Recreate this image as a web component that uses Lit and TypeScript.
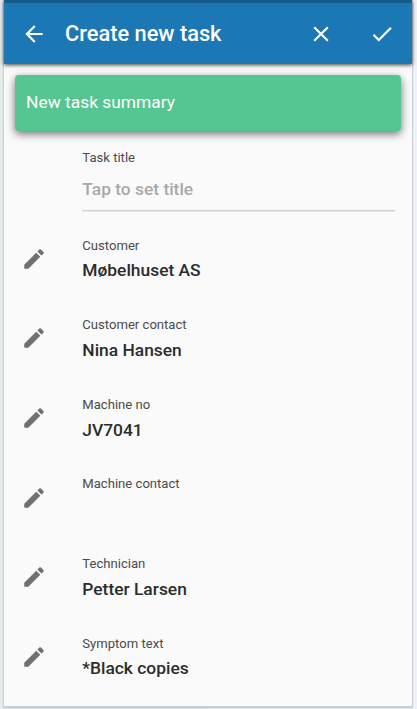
import { LitElement, html, css, svg } from "lit";
import { customElement } from "lit/decorators.js";

const ICONS = {
  back: "M20 11H7.83l5.59-5.59L12 4l-8 8 8 8 1.41-1.41L7.83 13H20v-2z",
  close: "M19 6.41L17.59 5 12 10.59 6.41 5 5 6.41 10.59 12 5 17.59 6.41 19 12 13.41 17.59 19 19 17.59 13.41 12z",
  check: "M9 16.17L4.83 12l-1.42 1.41L9 19 21 7l-1.41-1.41z",
  edit: "M3 17.25V21h3.75L17.81 9.94l-3.75-3.75L3 17.25zM20.71 7.04c.39-.39.39-1.02 0-1.41l-2.34-2.34c-.39-.39-1.02-.39-1.41 0l-1.83 1.83 3.75 3.75 1.83-1.83z",
};

const icon = (name: keyof typeof ICONS) =>
  html`<svg class="icon" viewBox="0 0 24 24" aria-hidden="true">${svg`<path d=${ICONS[name]}></path>`}</svg>`;

const FIELDS = [
  { label: "Customer", value: "Møbelhuset AS" },
  { label: "Customer contact", value: "Nina Hansen" },
  { label: "Machine no", value: "JV7041" },
  { label: "Machine contact", value: "" },
  { label: "Technician", value: "Petter Larsen" },
  { label: "Symptom text", value: "*Black copies" },
];

@customElement("app-root")
export class AppRoot extends LitElement {
  static styles = css`
    :host {
      display: block;
      box-sizing: border-box;
      height: 709px;
      padding: 0 5px 3px 4px;
      overflow: hidden;
      background: linear-gradient(90deg, #e6ebee 0 50%, #eff3f9 50%);
      font-family: Roboto, sans-serif;
      color: #2c2c2c;
    }
    * { box-sizing: border-box; }
    .phone {
      height: 706px;
      background: #fafafa;
      box-shadow: 0 0 0 1px #cdd1d6, 0 1px 1px 1px #c3cad1;
    }
    .icon { display: block; width: 26px; height: 26px; fill: currentColor; }
    button { display: block; padding: 0; border: 0; background: none; color: inherit; }
    .bar {
      display: flex;
      align-items: center;
      height: 64px;
      padding: 0 17.4px 0 17.4px;
      border-top: 3px solid #165b87;
      background: #1b78b4;
      color: #fff;
      box-shadow: 0 1px 4px rgba(0, 0, 0, 0.75);
    }
    .title {
      flex: 1;
      margin: 0 0 0 17.6px;
      font-size: 21.8px;
      font-weight: 500;
      line-height: 28px;
    }
    .actions { display: flex; gap: 35px; }
    .banner {
      display: flex;
      align-items: center;
      height: 56px;
      margin: 11px 11px 0;
      padding: 0 0 2px 11px;
      border-radius: 4px;
      background: #55c592;
      color: #fff;
      font-size: 17.4px;
      box-shadow: 0 3px 9px rgba(0, 0, 0, 0.55);
    }
    .entry {
      margin: 18px 17px 0 78px;
      height: 62px;
      border-bottom: 1px solid #d0d0d0;
      box-shadow: 0 1px #e8e8e8;
    }
    .label { padding-left: 0.3px; font-size: 13.1px; line-height: 18px; color: #4b4b4b; }
    .input {
      display: block;
      width: 100%;
      margin-top: 10px;
      padding: 0 0 0 0.3px;
      border: 0;
      outline: 0;
      background: none;
      font: 500 17.4px/24px Roboto, sans-serif;
    }
    .input::placeholder { color: #a9a9a9; opacity: 1; }
    .fields { display: grid; grid-auto-rows: 79.6px; padding-top: 25.6px; }
    .row { display: grid; grid-template-columns: 61px 1fr; align-items: start; padding-left: 17px; }
    .row .icon { margin-top: 9.3px; color: #707070; }
    .value { margin-top: 3.8px; padding-left: 0.3px; font-size: 17.4px; font-weight: 500; line-height: 24px; }
  `;

  render() {
    return html`
      <main class="phone">
        <header class="bar">
          <button aria-label="Back">${icon("back")}</button>
          <h1 class="title">Create new task</h1>
          <div class="actions">
            <button aria-label="Cancel">${icon("close")}</button>
            <button aria-label="Save">${icon("check")}</button>
          </div>
        </header>
        <div class="banner">New task summary</div>
        <div class="entry">
          <div class="label">Task title</div>
          <input class="input" aria-label="Task title" placeholder="Tap to set title" />
        </div>
        <div class="fields">
          ${FIELDS.map(
            (f) => html`<div class="row">
              <button aria-label="Edit ${f.label}">${icon("edit")}</button>
              <div>
                <div class="label">${f.label}</div>
                <div class="value">${f.value}</div>
              </div>
            </div>`
          )}
        </div>
      </main>
    `;
  }
}
